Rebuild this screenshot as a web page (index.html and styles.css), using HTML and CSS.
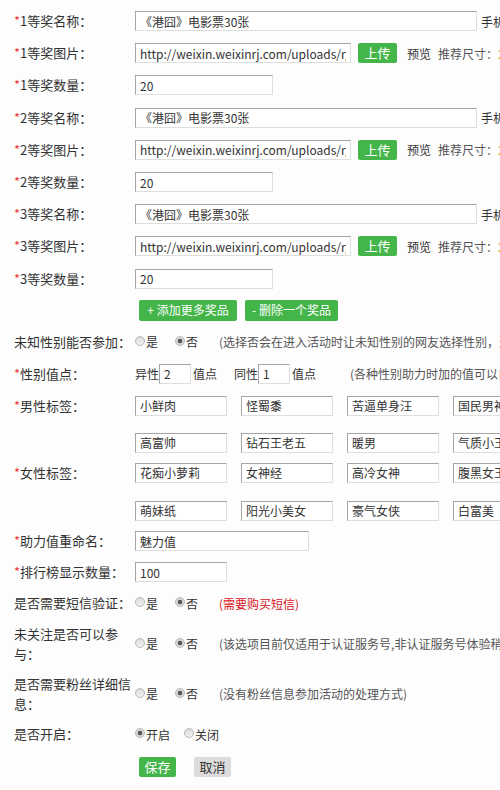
FILE: index.html
```html
<!DOCTYPE html>
<html lang="zh-CN">
<head>
    <meta charset="UTF-8">
    <meta name="viewport" content="width=device-width, initial-scale=1.0">
    <title>奖品设置</title>
    <link rel="stylesheet" href="styles.css">
</head>
<body>
    <form class="form">
        <!-- 1等奖 -->
        <div class="row row-prize">
            <label class="row-label"><span class="req">*</span>1等奖名称：</label>
            <div class="row-field">
                <input class="text-input w-long" type="text" value="《港囧》电影票30张">
                <span class="hint">手机端显示的奖品名称</span>
            </div>
        </div>
        <div class="row row-prize">
            <label class="row-label"><span class="req">*</span>1等奖图片：</label>
            <div class="row-field">
                <input class="text-input w-url" type="text" value="http://weixin.weixinrj.com/uploads/r/prize1.jpg">
                <button type="button" class="btn btn-upload">上传</button>
                <span class="preview">预览</span>
                <span class="size-tip">推荐尺寸：<em>200*200</em></span>
            </div>
        </div>
        <div class="row row-prize">
            <label class="row-label"><span class="req">*</span>1等奖数量：</label>
            <div class="row-field">
                <input class="text-input w-short" type="text" value="20">
            </div>
        </div>

        <!-- 2等奖 -->
        <div class="row row-prize">
            <label class="row-label"><span class="req">*</span>2等奖名称：</label>
            <div class="row-field">
                <input class="text-input w-long" type="text" value="《港囧》电影票30张">
                <span class="hint">手机端显示的奖品名称</span>
            </div>
        </div>
        <div class="row row-prize">
            <label class="row-label"><span class="req">*</span>2等奖图片：</label>
            <div class="row-field">
                <input class="text-input w-url" type="text" value="http://weixin.weixinrj.com/uploads/r/prize2.jpg">
                <button type="button" class="btn btn-upload">上传</button>
                <span class="preview">预览</span>
                <span class="size-tip">推荐尺寸：<em>200*200</em></span>
            </div>
        </div>
        <div class="row row-prize">
            <label class="row-label"><span class="req">*</span>2等奖数量：</label>
            <div class="row-field">
                <input class="text-input w-short" type="text" value="20">
            </div>
        </div>

        <!-- 3等奖 -->
        <div class="row row-prize">
            <label class="row-label"><span class="req">*</span>3等奖名称：</label>
            <div class="row-field">
                <input class="text-input w-long" type="text" value="《港囧》电影票30张">
                <span class="hint">手机端显示的奖品名称</span>
            </div>
        </div>
        <div class="row row-prize">
            <label class="row-label"><span class="req">*</span>3等奖图片：</label>
            <div class="row-field">
                <input class="text-input w-url" type="text" value="http://weixin.weixinrj.com/uploads/r/prize3.jpg">
                <button type="button" class="btn btn-upload">上传</button>
                <span class="preview">预览</span>
                <span class="size-tip">推荐尺寸：<em>200*200</em></span>
            </div>
        </div>
        <div class="row row-prize">
            <label class="row-label"><span class="req">*</span>3等奖数量：</label>
            <div class="row-field">
                <input class="text-input w-short" type="text" value="20">
            </div>
        </div>

        <div class="row row-actions">
            <div class="row-label"></div>
            <div class="row-field field-buttons">
                <button type="button" class="btn btn-add btn-more">+ 添加更多奖品</button>
                <button type="button" class="btn btn-add btn-less">- 删除一个奖品</button>
            </div>
        </div>

        <div class="row">
            <label class="row-label">未知性别能否参加：</label>
            <div class="row-field">
                <label class="radio-item"><input class="radio" type="radio" name="unknown">是</label>
                <label class="radio-item"><input class="radio" type="radio" name="unknown" checked>否</label>
                <span class="note">(选择否会在进入活动时让未知性别的网友选择性别，<span class="warn">选择是则直接参加</span>)</span>
            </div>
        </div>

        <div class="row">
            <label class="row-label"><span class="req">*</span>性别值点：</label>
            <div class="row-field">
                <span>异性</span><input class="text-input w-num" type="text" value="2"><span class="unit">值点</span>
                <span class="same">同性</span><input class="text-input w-num" type="text" value="1"><span class="unit">值点</span>
                <span class="note note-far">(各种性别助力时加的值可以自行设置)</span>
            </div>
        </div>

        <div class="row row-tags row-tags-male">
            <label class="row-label"><span class="req">*</span>男性标签：</label>
            <div class="row-field tag-lines">
                <div class="tag-line">
                    <input class="text-input w-tag" type="text" value="小鲜肉">
                    <input class="text-input w-tag" type="text" value="怪蜀黍">
                    <input class="text-input w-tag" type="text" value="苦逼单身汪">
                    <input class="text-input w-tag" type="text" value="国民男神">
                </div>
                <div class="tag-line">
                    <input class="text-input w-tag" type="text" value="高富帅">
                    <input class="text-input w-tag" type="text" value="钻石王老五">
                    <input class="text-input w-tag" type="text" value="暖男">
                    <input class="text-input w-tag" type="text" value="气质小王子">
                </div>
            </div>
        </div>

        <div class="row row-tags row-tags-female">
            <label class="row-label"><span class="req">*</span>女性标签：</label>
            <div class="row-field tag-lines">
                <div class="tag-line">
                    <input class="text-input w-tag" type="text" value="花痴小萝莉">
                    <input class="text-input w-tag" type="text" value="女神经">
                    <input class="text-input w-tag" type="text" value="高冷女神">
                    <input class="text-input w-tag" type="text" value="腹黑女王">
                </div>
                <div class="tag-line">
                    <input class="text-input w-tag" type="text" value="萌妹纸">
                    <input class="text-input w-tag" type="text" value="阳光小美女">
                    <input class="text-input w-tag" type="text" value="豪气女侠">
                    <input class="text-input w-tag" type="text" value="白富美">
                </div>
            </div>
        </div>

        <div class="row row-short">
            <label class="row-label"><span class="req">*</span>助力值重命名：</label>
            <div class="row-field">
                <input class="text-input w-mid" type="text" value="魅力值">
            </div>
        </div>

        <div class="row row-short">
            <label class="row-label"><span class="req">*</span>排行榜显示数量：</label>
            <div class="row-field">
                <input class="text-input w-tag" type="text" value="100">
            </div>
        </div>

        <div class="row row-short">
            <label class="row-label">是否需要短信验证：</label>
            <div class="row-field">
                <label class="radio-item"><input class="radio" type="radio" name="sms">是</label>
                <label class="radio-item"><input class="radio" type="radio" name="sms" checked>否</label>
                <span class="note warn">(需要购买短信)</span>
            </div>
        </div>

        <div class="row row-double">
            <label class="row-label">未关注是否可以参与：</label>
            <div class="row-field">
                <label class="radio-item"><input class="radio" type="radio" name="follow">是</label>
                <label class="radio-item"><input class="radio" type="radio" name="follow" checked>否</label>
                <span class="note">(该选项目前仅适用于认证服务号,非认证服务号体验稍差)</span>
            </div>
        </div>

        <div class="row row-double">
            <label class="row-label">是否需要粉丝详细信息：</label>
            <div class="row-field">
                <label class="radio-item"><input class="radio" type="radio" name="fans">是</label>
                <label class="radio-item"><input class="radio" type="radio" name="fans" checked>否</label>
                <span class="note">(没有粉丝信息参加活动的处理方式)</span>
            </div>
        </div>

        <div class="row row-short">
            <label class="row-label">是否开启：</label>
            <div class="row-field">
                <label class="radio-item radio-open"><input class="radio" type="radio" name="status" checked>开启</label>
                <label class="radio-item"><input class="radio" type="radio" name="status">关闭</label>
            </div>
        </div>

        <div class="row row-submit">
            <div class="row-label"></div>
            <div class="row-field field-buttons">
                <button type="submit" class="btn btn-save">保存</button>
                <button type="button" class="btn btn-cancel">取消</button>
            </div>
        </div>
    </form>
</body>
</html>
```

FILE: styles.css
```css
html,
body {
    overflow: hidden;
}

body {
    margin: 0;
    padding-top: 5px;
    background-color: #fdfdfd;
    font-family: "Noto Sans CJK SC", sans-serif;
    font-size: 13px;
    color: #333;
}

.form {
    white-space: nowrap;
}

.row {
    display: flex;
    align-items: center;
    height: 32px;
}

.row-prize {
    height: 32.2px;
}

.row-actions {
    height: 31px;
}

.row-short {
    height: 31px;
}

.row-double {
    height: 50px;
}

.row-submit {
    height: 34px;
}

.row-label {
    flex: none;
    width: 135px;
    padding-left: 14px;
    box-sizing: border-box;
    white-space: normal;
    line-height: 20px;
}

.req {
    color: #f04040;
}

.row-field {
    display: flex;
    align-items: center;
    font-size: 12px;
}

.text-input {
    height: 20px;
    box-sizing: border-box;
    margin: 0;
    padding: 0 4px;
    border: 1px solid;
    border-color: #a5a5a5 #dedede #dedede #a5a5a5;
    background-color: #fff;
    font: inherit;
    color: #333;
}

.w-long { width: 342px; }
.w-url { width: 216px; }
.w-short { width: 138px; }
.w-tag { width: 92px; }
.w-mid { width: 174px; }
.w-num { width: 32px; }

.hint {
    margin-left: 4px;
}

.btn {
    height: 20px;
    margin: 0;
    padding: 0;
    border: none;
    border-radius: 2px;
    font: inherit;
    line-height: 20px;
    cursor: pointer;
}

.btn-upload {
    width: 39px;
    margin-left: 7px;
    background-color: #44b549;
    color: #fff;
    font-size: 13px;
}

.preview {
    margin-left: 10px;
}

.size-tip {
    margin-left: 7px;
    color: #555;
}

.size-tip em {
    font-style: normal;
    color: #f5a623;
}

.field-buttons {
    margin-left: 4px;
}

.btn-add {
    height: 21px;
    background-color: #44b549;
    color: #fff;
}

.btn-more {
    width: 98px;
}

.btn-less {
    width: 93px;
    margin-left: 8px;
}

.radio-item {
    display: inline-flex;
    align-items: center;
    margin-right: 17px;
}

.radio-open {
    margin-right: 14px;
}

.radio {
    appearance: none;
    -webkit-appearance: none;
    width: 10px;
    height: 10px;
    margin: 0 1px 2px 0;
    border: 1px solid #b8b8b8;
    border-radius: 50%;
    background: linear-gradient(#dcdcdc, #f2f2f2);
}

.radio:checked {
    background: radial-gradient(circle, #555 0, #555 2px, #d8d8d8 2.6px);
}

.note {
    margin-left: 4px;
    color: #555;
}

.warn {
    color: #d9141c;
}

.unit {
    margin-left: 2px;
}

.same {
    margin-left: 17px;
}

.note-far {
    margin-left: 34px;
}

.row-tags {
    height: auto;
    align-items: flex-start;
}

.row-tags-male {
    padding: 6px 0 5px;
}

.row-tags-female {
    padding: 5px 0 5px;
}

.tag-lines {
    flex-direction: column;
    align-items: flex-start;
    gap: 17px;
}

.row-tags-female .tag-lines {
    gap: 18px;
}

.tag-line {
    display: flex;
    gap: 14px;
}

.btn-save {
    width: 37px;
    background-color: #44b549;
    color: #fff;
    font-size: 13px;
}

.btn-cancel {
    width: 37px;
    margin-left: 18px;
    background-color: #dcdcdc;
    color: #333;
    font-size: 13px;
}
```
